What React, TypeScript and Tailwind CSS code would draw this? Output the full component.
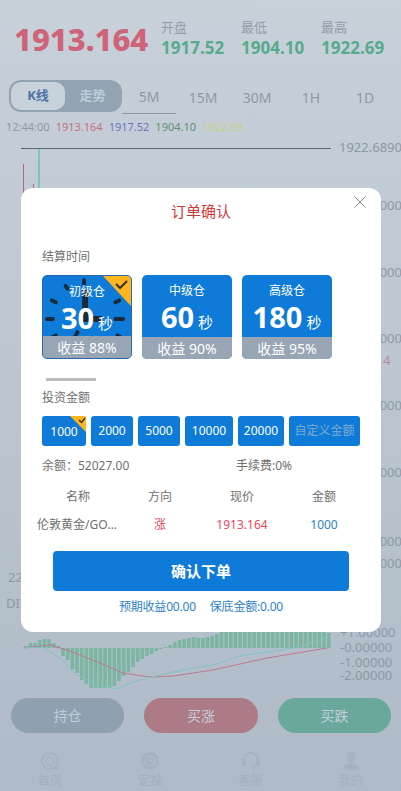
const FONT = '"Noto Sans", "Noto Sans CJK SC", sans-serif';

const bars = [2, 5, 5, 8, 9, 9, 5, 2, -8, -12, -21, -25, -32, -36, -40, -40, -40, -40, -40, -38, -33, -28, -24, -19, -14, -11, -8, -6, -3, -1, 1, 3, 6, 8, 9, 10, 11, 10, 10, 11, 12, 14, 16, 16, 16, 16, 16, 16, 16, 16, 16, 16, 16, 16, 16, 16, 16, 16, 16, 16, 16, 16, 16, 16, 16, 15];

const tabs = ["5M", "15M", "30M", "1H", "1D"];
const levels = [
  { name: "初级仓", sec: "30", rate: "收益 88%", on: true },
  { name: "中级仓", sec: "60", rate: "收益 90%", on: false },
  { name: "高级仓", sec: "180", rate: "收益 95%", on: false },
];
const amounts = [
  { v: "1000", w: "w-[44px]", on: true },
  { v: "2000", w: "w-[42px]", on: false },
  { v: "5000", w: "w-[42px]", on: false },
  { v: "10000", w: "w-[48px]", on: false },
  { v: "20000", w: "w-[46px]", on: false },
];

function Clock() {
  return (
    <svg viewBox="0 0 90 84" className="absolute inset-0 w-full h-full">
      <g stroke="#1b2a3a" strokeWidth="4" strokeLinecap="round">
        <path d="M42 4V8M23 10L25 13M9 25L13 27M4 44H10M9 63L13 61M74 27L78 25M74 44H82M76 61L80 63" />
      </g>
      <path d="M43 14V44H61" stroke="#1b2a3a" strokeWidth="6" fill="none" />
      <path d="M36 56L30 68" stroke="#1b2a3a" strokeWidth="4" />
    </svg>
  );
}

function Corner({ small }: { small?: boolean }) {
  if (small) {
    return (
      <svg viewBox="0 0 16 16" className="absolute top-0 right-0 w-[16px] h-[16px]">
        <path d="M0 0H14Q16 0 16 2V16Z" fill="#fdb61e" />
        <path d="M9 4L11.5 6.5L15 2" stroke="#333" strokeWidth="1.4" fill="none" />
      </svg>
    );
  }
  return (
    <svg viewBox="0 0 28 30" className="absolute top-0 right-0 w-[28px] h-[30px]">
      <path d="M0 0H25Q28 0 28 3V30Z" fill="#fdb61e" />
      <path d="M13 8L17 12L24 5" stroke="#333" strokeWidth="2" fill="none" />
    </svg>
  );
}

function NavIcon({ i }: { i: number }) {
  const c = "#a6b3bf";
  return (
    <svg viewBox="0 0 20 20" className="w-[20px] h-[20px]">
      {i === 0 && (
        <g fill="none" stroke={c}>
          <circle cx="10" cy="10" r="8" strokeWidth="2" />
          <circle cx="10" cy="10" r="4" strokeWidth="1.5" />
          <path d="M13 18H19" strokeWidth="2" />
        </g>
      )}
      {i === 1 && (
        <g>
          <circle cx="10" cy="10" r="9" fill={c} />
          <circle cx="10" cy="10" r="5" fill="none" stroke="#b4c0cb" />
          <path d="M10 7V10H12.5" fill="none" stroke="#b4c0cb" />
        </g>
      )}
      {i === 2 && (
        <g fill="none" stroke={c} strokeWidth="2">
          <path d="M3 12V9A7 7 0 0 1 17 9V12" />
          <path d="M16 13Q15 17 11 18" />
          <rect x="2" y="9" width="2" height="5" fill={c} />
          <rect x="16" y="9" width="2" height="5" fill={c} />
        </g>
      )}
      {i === 3 && (
        <g fill={c}>
          <ellipse cx="10" cy="6" rx="4.5" ry="5.5" />
          <path d="M2 19Q3 12 10 12Q17 12 18 19Z" />
        </g>
      )}
    </svg>
  );
}

export default function App() {
  return (
    <div className="relative w-[401px] h-[791px] overflow-hidden bg-gradient-to-b from-[#c8d1da] to-[#aebac6]" style={{ fontFamily: FONT }}>
      {/* Header */}
      <div className="flex items-start h-[80px] pl-[14px] pt-[17px]">
        <div className="w-[146px] text-[31px] leading-[44px] font-extrabold text-[#cf6377]">1913.164</div>
        <div className="flex ml-[1px] pt-[1px]">
          {[["开盘", "1917.52"], ["最低", "1904.10"], ["最高", "1922.69"]].map((r) => (
            <div key={r[0]} className="w-[80px]">
              <p className="text-[13px] leading-[18px] text-[#919da9]">{r[0]}</p>
              <p className="text-[17px] leading-[24px] font-bold text-[#56ab8a]">{r[1]}</p>
            </div>
          ))}
        </div>
      </div>

      {/* Tabs */}
      <div className="flex items-start pl-[9px]">
        <div className="flex items-center w-[113px] h-[32px] rounded-[12px] bg-[#93a3b2] p-[2px]">
          <div className="w-[54px] h-[28px] rounded-[10px] bg-[#c8d2dd] flex items-center justify-center text-[13px] font-bold text-[#4f74a5]">K线</div>
          <div className="flex-1 text-center text-[13px] font-bold text-[#bfcbd7]">走势</div>
        </div>
        {tabs.map((t, i) => (
          <div key={t} className={`w-[54px] h-[34px] flex items-center justify-center text-[14px] text-[#8d99a5] ${i === 0 ? "border-b border-[#8d99a5]" : ""}`}>{t}</div>
        ))}
      </div>

      {/* Quote line */}
      <div className="flex gap-[6px] pl-[6px] mt-[5px] text-[11px] leading-[16px]">
        <span className="text-[#8d99a5]">12:44:00</span>
        <span className="text-[#c9707f]">1913.164</span>
        <span className="text-[#6f72c4]">1917.52</span>
        <span className="text-[#5f9272]">1904.10</span>
        <span className="text-[#c6d27a]">1922.69</span>
      </div>

      {/* Chart canvas */}
      <div className="absolute left-0 top-[140px] w-[401px] h-[550px] text-[13px] leading-[14px] text-[#8d99a5]">
        <svg viewBox="0 0 401 550" className="absolute inset-0 w-full h-full">
          <path d="M21 8.5H331" stroke="#5b6873" />
          <path d="M39 9V60" stroke="#7fc3c6" strokeWidth="2" />
          <path d="M23.5 24V60" stroke="#b06a7a" />
          <path d="M33.5 44V60" stroke="#b06a7a" />
          {bars.map((b, i) => (
            <rect key={i} x={24 + i * 4.66} y={b > 0 ? 508 - b : 508} width="3.6" height={Math.abs(b)} fill="#7ab6a0" />
          ))}
          <polyline fill="none" stroke="#c0788f" points="23,508 50,505 67,510 100,523 123,533 150,537 173,536 213,530 267,518 327,508" />
          <polyline fill="none" stroke="#7fc3c6" points="23,508 43,507 60,518 77,535 97,545 117,549 133,542 160,535 187,529 213,525 240,516 267,512 300,507 328,497" />
        </svg>
        <span className="absolute left-[339px] top-[0px] whitespace-nowrap">1922.68900</span>
        {[58, 125, 191, 258, 325, 394, 416].map((y) => (
          <span key={y} className="absolute left-[339px] whitespace-nowrap" style={{ top: y }}>1900.00000</span>
        ))}
        <span className="absolute left-[383px] top-[213px] text-[#b9899c]">4</span>
        <span className="absolute left-[8px] top-[430px]">22</span>
        <span className="absolute left-[6px] top-[456px]">DIF</span>
        <span className="absolute left-[340px] top-[485px]">+1.00000</span>
        <span className="absolute left-[340px] top-[500px]">-0.00000</span>
        <span className="absolute left-[340px] top-[515px]">-1.00000</span>
        <span className="absolute left-[340px] top-[528px]">-2.00000</span>
      </div>

      {/* Buy buttons */}
      <div className="absolute left-[11px] right-[10px] top-[698px] flex justify-between text-[14px] text-[#c3ced8]">
        <div className="w-[113px] h-[35px] rounded-full bg-[#8fa0ae] flex items-center justify-center">持仓</div>
        <div className="w-[114px] h-[35px] rounded-full bg-[#ad7b85] flex items-center justify-center">买涨</div>
        <div className="w-[113px] h-[35px] rounded-full bg-[#69a89b] flex items-center justify-center">买跌</div>
      </div>

      {/* Bottom nav */}
      <div className="absolute left-0 right-0 top-[751px] flex">
        {["首页", "定投", "客服", "我的"].map((t, i) => (
          <div key={t} className="flex-1 flex flex-col items-center">
            <NavIcon i={i} />
            <span className="text-[12px] leading-[20px] text-[#a3b0bc]">{t}</span>
          </div>
        ))}
      </div>

      {/* Order dialog */}
      <div className="absolute left-[21px] top-[188px] w-[360px] h-[444px] bg-white rounded-[12px] px-[21px]">
        <svg viewBox="0 0 12 12" className="absolute right-[15px] top-[8px] w-[12px] h-[12px]">
          <path d="M0.5 0.5L11.5 11.5M11.5 0.5L0.5 11.5" stroke="#888" />
        </svg>
        <p className="pt-[13px] text-center text-[15px] leading-[20px] text-[#d0393a]">订单确认</p>
        <p className="mt-[26px] text-[12px] leading-[20px] text-[#707070]">结算时间</p>
        <div className="flex gap-[10px] mt-[8px]">
          {levels.map((l) => (
            <div key={l.name} className={`relative w-[90px] h-[84px] rounded-[5px] overflow-hidden bg-[#0e7bd9] text-white ${l.on ? "border border-[#2a6aa8]" : ""}`}>
              {l.on && <Clock />}
              {l.on && <Corner />}
              <div className="relative flex flex-col items-center h-full">
                <p className="mt-[7px] text-[12px] leading-[18px]">{l.name}</p>
                <p className="flex items-baseline -mt-[1px] h-[36px] font-bold text-[29px] leading-[36px]">
                  {l.sec}
                  <span className="ml-[4px] text-[15px] font-normal">秒</span>
                </p>
                <div className="absolute left-0 right-0 bottom-0 h-[22px] bg-[#97a5b4] flex items-center justify-center text-[14px] text-white">{l.rate}</div>
              </div>
            </div>
          ))}
        </div>
        <div className="w-[50px] h-[3px] ml-[4px] mt-[19px] bg-[#bbbbbb]" />
        <p className="mt-[7px] text-[12px] leading-[20px] text-[#707070]">投资金额</p>
        <div className="flex gap-[5px] mt-[8px]">
          {amounts.map((a) => (
            <div key={a.v} className={`relative ${a.w} h-[30px] rounded-[3px] bg-[#0e7bd9] flex items-center justify-center text-[12px] text-white`}>
              {a.on && <Corner small />}
              <span className={a.on ? "mt-[2px]" : ""}>{a.v}</span>
            </div>
          ))}
          <div className="w-[71px] h-[30px] rounded-[3px] bg-[#0e7bd9] flex items-center justify-center text-[12px] text-[#7fa9cf]">自定义金额</div>
        </div>
        <div className="flex mt-[10px] text-[12px] leading-[20px] text-[#707070]">
          <span className="w-[194px]">余额：52027.00</span>
          <span>手续费:0%</span>
        </div>
        <div className="grid grid-cols-4 -mx-[5px] mt-[11px] text-center text-[12px] leading-[20px] text-[#707070]">
          <span>名称</span>
          <span>方向</span>
          <span>现价</span>
          <span>金额</span>
        </div>
        <div className="grid grid-cols-4 -mx-[5px] mt-[8px] text-center text-[12px] leading-[20px]">
          <span className="truncate text-[#707070]">伦敦黄金/GOLD</span>
          <span className="text-[#e8475f]">涨</span>
          <span className="text-[#e8475f]">1913.164</span>
          <span className="text-[#2d82c8]">1000</span>
        </div>
        <div className="mt-[16px] mx-[11px] h-[40px] rounded-[4px] bg-[#0e7bd9] flex items-center justify-center text-[15px] font-semibold text-white">确认下单</div>
        <div className="flex justify-center gap-[14px] mt-[6px] text-[12px] leading-[20px] tracking-[-0.2px] text-[#2d82c8]">
          <span>预期收益00.00</span>
          <span>保底金额:0.00</span>
        </div>
      </div>
    </div>
  );
}
